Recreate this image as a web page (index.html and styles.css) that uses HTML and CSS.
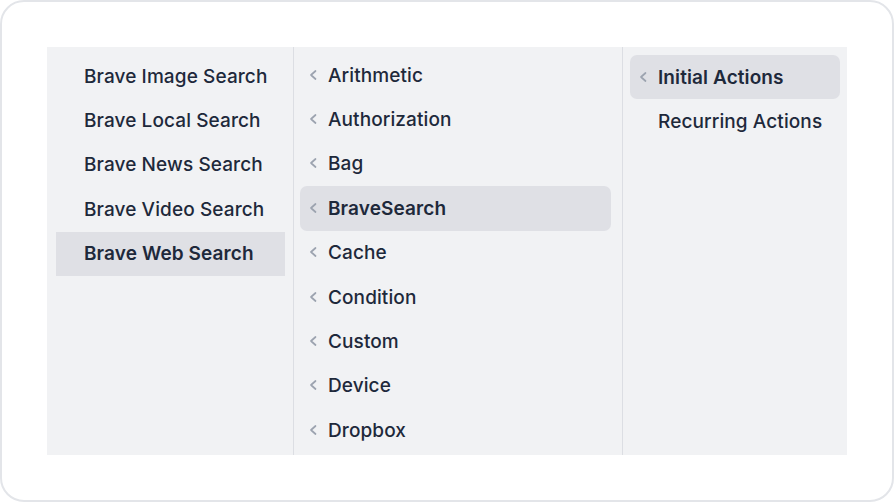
FILE: index.html
```html
<!DOCTYPE html>
<html>
<head>
<meta charset="utf-8">
<link rel="stylesheet" href="styles.css">
</head>
<body>
<div class="card">
  <div class="panel">
    <div class="col col1">
      <div class="item">Brave Image Search</div>
      <div class="item">Brave Local Search</div>
      <div class="item">Brave News Search</div>
      <div class="item">Brave Video Search</div>
      <div class="item active">Brave Web Search</div>
    </div>
    <div class="col col2">
      <div class="item"><span class="chev"><svg width="8" height="12" viewBox="0 0 8 12"><path d="M6.5 2 L2 6 L6.5 10" fill="none" stroke="currentColor" stroke-width="1.7" stroke-linecap="round" stroke-linejoin="round"/></svg></span>Arithmetic</div>
      <div class="item"><span class="chev"><svg width="8" height="12" viewBox="0 0 8 12"><path d="M6.5 2 L2 6 L6.5 10" fill="none" stroke="currentColor" stroke-width="1.7" stroke-linecap="round" stroke-linejoin="round"/></svg></span>Authorization</div>
      <div class="item"><span class="chev"><svg width="8" height="12" viewBox="0 0 8 12"><path d="M6.5 2 L2 6 L6.5 10" fill="none" stroke="currentColor" stroke-width="1.7" stroke-linecap="round" stroke-linejoin="round"/></svg></span>Bag</div>
      <div class="item active rounded"><span class="chev"><svg width="8" height="12" viewBox="0 0 8 12"><path d="M6.5 2 L2 6 L6.5 10" fill="none" stroke="currentColor" stroke-width="1.7" stroke-linecap="round" stroke-linejoin="round"/></svg></span>BraveSearch</div>
      <div class="item"><span class="chev"><svg width="8" height="12" viewBox="0 0 8 12"><path d="M6.5 2 L2 6 L6.5 10" fill="none" stroke="currentColor" stroke-width="1.7" stroke-linecap="round" stroke-linejoin="round"/></svg></span>Cache</div>
      <div class="item"><span class="chev"><svg width="8" height="12" viewBox="0 0 8 12"><path d="M6.5 2 L2 6 L6.5 10" fill="none" stroke="currentColor" stroke-width="1.7" stroke-linecap="round" stroke-linejoin="round"/></svg></span>Condition</div>
      <div class="item"><span class="chev"><svg width="8" height="12" viewBox="0 0 8 12"><path d="M6.5 2 L2 6 L6.5 10" fill="none" stroke="currentColor" stroke-width="1.7" stroke-linecap="round" stroke-linejoin="round"/></svg></span>Custom</div>
      <div class="item"><span class="chev"><svg width="8" height="12" viewBox="0 0 8 12"><path d="M6.5 2 L2 6 L6.5 10" fill="none" stroke="currentColor" stroke-width="1.7" stroke-linecap="round" stroke-linejoin="round"/></svg></span>Device</div>
      <div class="item"><span class="chev"><svg width="8" height="12" viewBox="0 0 8 12"><path d="M6.5 2 L2 6 L6.5 10" fill="none" stroke="currentColor" stroke-width="1.7" stroke-linecap="round" stroke-linejoin="round"/></svg></span>Dropbox</div>
    </div>
    <div class="col col3">
      <div class="item active rounded"><span class="chev"><svg width="8" height="12" viewBox="0 0 8 12"><path d="M6.5 2 L2 6 L6.5 10" fill="none" stroke="currentColor" stroke-width="1.7" stroke-linecap="round" stroke-linejoin="round"/></svg></span>Initial Actions</div>
      <div class="item plain">Recurring Actions</div>
    </div>
  </div>
</div>
</body>
</html>
```

FILE: styles.css
```css
* { box-sizing: border-box; }
html, body { margin: 0; padding: 0; background: #ffffff; }
body {
  width: 894px;
  height: 502px;
  font-family: Inter, "Noto Sans", sans-serif;
}
.card {
  width: 894px;
  height: 502px;
  border: 2px solid #e3e5e9;
  border-radius: 24px;
  background: #ffffff;
  padding: 45px;
}
.panel {
  display: flex;
  width: 800px;
  height: 408px;
  background: #f1f2f4;
  overflow: hidden;
}
.col {
  display: flex;
  flex-direction: column;
}
.col1 {
  width: 246px;
  padding: 7px 8px 0 9px;
}
.col2 {
  width: 329px;
  border-left: 1px solid #dcdee3;
  padding: 6px 11px 0 6px;
}
.col3 {
  flex: 1;
  border-left: 1px solid #dcdee3;
  padding: 8px 7px 0 7px;
}
.item {
  display: flex;
  align-items: center;
  height: 44.4px;
  flex-shrink: 0;
  font-size: 19px;
  font-weight: 500;
  color: #1e293b;
  letter-spacing: 0.1px;
  white-space: nowrap;
}
.col1 .item { padding-left: 28px; }
.col2 .item, .col3 .item { padding-left: 9px; }
.col3 .item.plain { padding-left: 28px; }
.item.active {
  background: #dfe0e5;
  font-weight: 600;
}
.item.rounded { border-radius: 7px; }
.chev {
  display: inline-flex;
  width: 8px;
  margin-right: 11px;
  margin-top: -1px;
  color: #9ca3af;
}
.chev svg { display: block; }
```
